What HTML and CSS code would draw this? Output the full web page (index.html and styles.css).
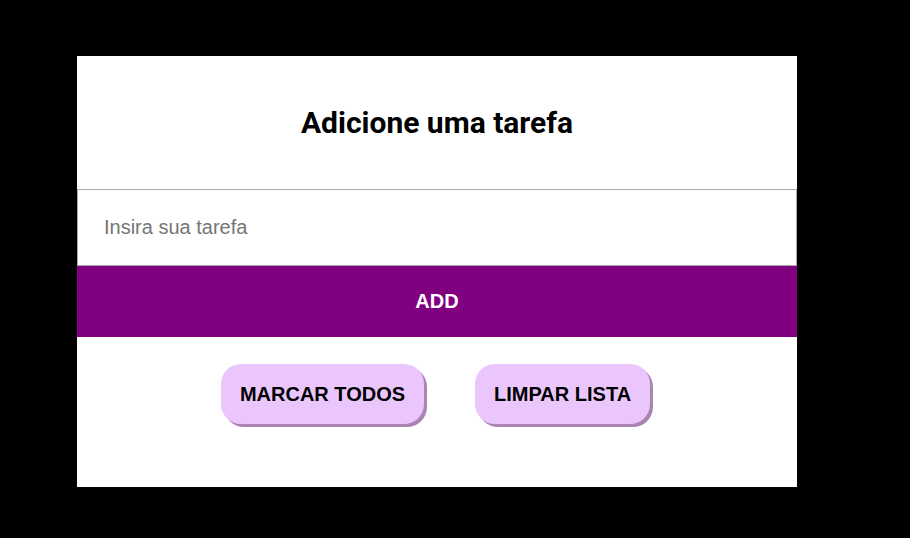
FILE: index.html
```html
<!DOCTYPE html>
<html lang="pt-BR">
<head>
<meta charset="utf-8">
<title>Tarefas</title>
<link rel="stylesheet" href="styles.css">
</head>
<body>
<main class="card">
  <header class="card-header">
    <h1 class="title">Adicione uma tarefa</h1>
  </header>
  <input class="task-input" type="text" placeholder="Insira sua tarefa">
  <button class="add-btn">ADD</button>
  <div class="actions">
    <button class="pill-btn">MARCAR TODOS</button>
    <button class="pill-btn">LIMPAR LISTA</button>
  </div>
</main>
</body>
</html>
```
FILE: styles.css
```css
html, body {
  margin: 0;
  background: #000;
}
body {
  padding: 56px 0 0 77px;
  font-family: "Liberation Sans", Arial, sans-serif;
}
.card {
  width: 720px;
  height: 431px;
  background: #fff;
  display: flex;
  flex-direction: column;
}
.card-header {
  height: 133px;
  display: flex;
  align-items: center;
  justify-content: center;
}
.title {
  margin: 0;
  font-family: Roboto, sans-serif;
  font-weight: 700;
  font-size: 30px;
  color: #000;
}
.task-input {
  box-sizing: border-box;
  width: 720px;
  height: 77px;
  margin: 0;
  border: 1px solid #aaa;
  padding: 0 0 0 26px;
  font-family: "Liberation Sans", Arial, sans-serif;
  font-size: 20px;
  outline: none;
}
.task-input::placeholder {
  color: #757575;
}
.add-btn {
  height: 71px;
  width: 720px;
  margin: 0;
  border: none;
  background: #800080;
  color: #fff;
  font-family: "Liberation Sans", Arial, sans-serif;
  font-weight: 700;
  font-size: 20px;
}
.actions {
  display: flex;
  justify-content: center;
  gap: 51px;
  padding-top: 27px;
  padding-right: 3px;
}
.pill-btn {
  height: 60px;
  padding: 0 19px;
  border: none;
  border-radius: 20px;
  background: #ebc6fc;
  box-shadow: 3px 3px 0 #a985b0;
  color: #000;
  font-family: "Liberation Sans", Arial, sans-serif;
  font-weight: 700;
  font-size: 20px;
}
```
